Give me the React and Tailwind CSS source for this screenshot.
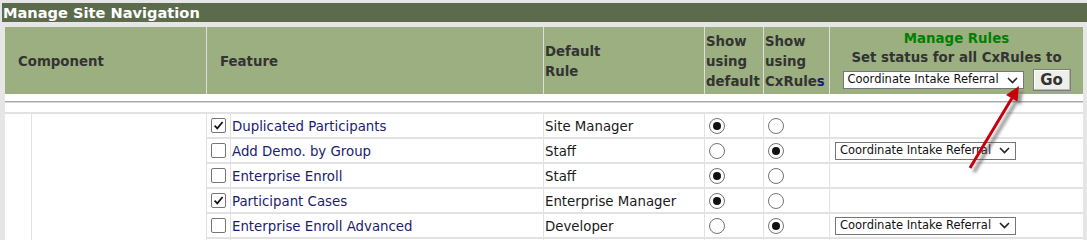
import React from "react";

const rows = [
  { checked: true, feature: "Duplicated Participants", rule: "Site Manager", cx: false, sel: false },
  { checked: false, feature: "Add Demo. by Group", rule: "Staff", cx: true, sel: true },
  { checked: false, feature: "Enterprise Enroll", rule: "Staff", cx: false, sel: false },
  { checked: true, feature: "Participant Cases", rule: "Enterprise Manager", cx: false, sel: false },
  { checked: false, feature: "Enterprise Enroll Advanced", rule: "Developer", cx: true, sel: true },
  { checked: false, feature: "", rule: "", cx: false, sel: false, blank: true },
];

function Radio({ on }) {
  return (
    <span className="w-[16px] h-[16px] rounded-full border border-[#737373] bg-white flex items-center justify-center">
      {on && <span className="w-[8px] h-[8px] rounded-full bg-[#111]" />}
    </span>
  );
}

function Check({ on }) {
  return (
    <span className="w-[15px] h-[15px] border border-[#767676] rounded-[2px] bg-white flex items-center justify-center">
      {on && (
        <svg width="11" height="11" viewBox="0 0 11 11">
          <path d="M1.6 5.6 L4.3 8.4 L9.6 2" stroke="#111" strokeWidth="1.7" fill="none" />
        </svg>
      )}
    </span>
  );
}

function Select() {
  return (
    <div className="w-[181px] h-[18px] border border-[#767676] bg-white flex items-center pl-[4px] pr-[5px] text-[11.5px] text-[#111] leading-none">
      <span className="flex-1 whitespace-nowrap">Coordinate Intake Referral</span>
      <svg width="11" height="7" viewBox="0 0 11 7">
        <path d="M1 1 L5.5 5.5 L10 1" stroke="#222" strokeWidth="1.6" fill="none" />
      </svg>
    </div>
  );
}

export default function App() {
  return (
    <div className="relative w-[1087px] h-[240px] overflow-hidden bg-[#e6e6e6] pt-[3px] font-['DejaVu_Sans',Verdana,sans-serif]">
      <div className="ml-[2px] h-[19px] bg-[#5b6b4b] text-white font-bold text-[14.6px] leading-[19px] pl-px">
        Manage Site Navigation
      </div>
      <div className="ml-[5px] mt-[5px] w-[1078px]">
        {/* header */}
        <div className="grid grid-cols-[201px_336px_160px_58px_65px_253px] gap-x-px bg-[#dedede] h-[67px] text-[13.33px] font-bold text-[#333]">
          <div className="bg-[#9caf80] flex items-center pl-[13px] pt-[3px]">Component</div>
          <div className="bg-[#9caf80] flex items-center pl-[13px] pt-[3px]">Feature</div>
          <div className="bg-[#9caf80] flex items-center pl-px pt-[3px] leading-[20px]">
            <span>Default<br />Rule</span>
          </div>
          <div className="bg-[#9caf80] flex items-center pl-px pt-[3px] leading-[20px]">
            <span>Show<br />using<br />default</span>
          </div>
          <div className="bg-[#9caf80] flex items-center pl-px pt-[3px] leading-[20px]">
            <span>Show<br />using<br />CxRule<span className="text-[#1b1b7a]">s</span></span>
          </div>
          <div className="bg-[#9caf80] flex flex-col items-center pt-[2px] leading-[19px]">
            <div className="text-[#008000]">Manage Rules</div>
            <div>Set status for all CxRules to</div>
            <div className="mt-[2px] flex items-center gap-[9px] font-normal">
              <Select />
              <div className="w-[38px] h-[22px] border border-[#7d7d7d] bg-[#edf0e6] shadow-[inset_-1px_-1px_0_#b9bdb0,inset_1px_1px_0_#ffffff] flex items-center justify-center font-bold text-[15px] text-[#333]">
                Go
              </div>
            </div>
          </div>
        </div>
        {/* separator band */}
        <div className="h-[18px] bg-white pt-[7px]">
          <div className="h-[2px] border-t border-[#a9a9a9] bg-[#d6d6d6]" />
        </div>
        {/* body */}
        <div className="grid grid-cols-[26px_174px_23px_312px_160px_58px_65px_253px] auto-rows-[23px] gap-x-px gap-y-[2px] bg-[#e2e2e2] pt-[2px] text-[13.33px]">
          <div className="bg-white row-span-6" />
          <div className="bg-white row-span-6" />
          {rows.map((r, i) => (
            <React.Fragment key={i}>
              <div className="bg-white flex items-center pl-[4px]">{!r.blank && <Check on={r.checked} />}</div>
              <div className="bg-white flex items-center pl-px pt-[2px] text-[#211c6e] whitespace-nowrap">{r.feature}</div>
              <div className="bg-white flex items-center pl-px pt-[2px] text-[#1a1a1a] whitespace-nowrap">{r.rule}</div>
              <div className="bg-white flex items-center pl-[4px]">{!r.blank && <Radio on={!r.cx} />}</div>
              <div className="bg-white flex items-center pl-[4px]">{!r.blank && <Radio on={r.cx} />}</div>
              <div className="bg-white flex items-center pl-[5px]">{r.sel && <Select />}</div>
            </React.Fragment>
          ))}
        </div>
      </div>
      {/* annotation arrow */}
      <svg className="absolute inset-0 pointer-events-none" width="1087" height="240" viewBox="0 0 1087 240">
        <defs>
          <filter id="sh" x="-50%" y="-50%" width="200%" height="200%">
            <feGaussianBlur stdDeviation="1.8" />
          </filter>
        </defs>
        <g transform="translate(4,4)" filter="url(#sh)" opacity="0.6">
          <line x1="970" y1="168" x2="1012" y2="98" stroke="#555" strokeWidth="3.5" />
          <polygon points="1019,86 1017,101 1006.6,95" fill="#555" />
        </g>
        <line x1="970" y1="168" x2="1012" y2="98" stroke="#c8000a" strokeWidth="3" />
        <polygon points="1019,86 1017.5,101.5 1006,95" fill="#c8000a" />
      </svg>
    </div>
  );
}
